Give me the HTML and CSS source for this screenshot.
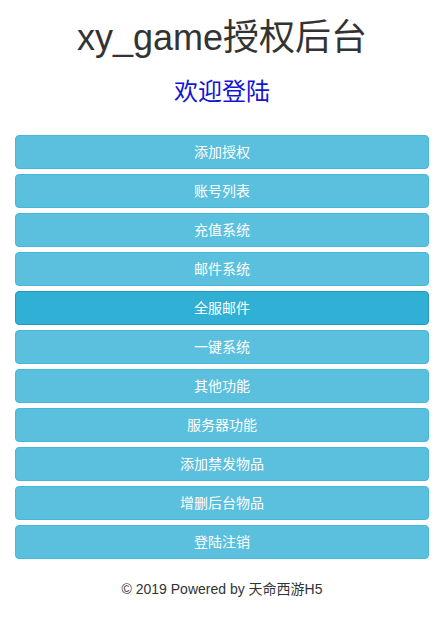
FILE: index.html
```html
<!DOCTYPE html>
<html lang="zh-CN">
<head>
<meta charset="utf-8">
<title>xy_game授权后台</title>
<link rel="stylesheet" href="styles.css">
</head>
<body>
<div class="container">
  <h1 class="title">xy_game授权后台</h1>
  <h3 class="welcome">欢迎登陆</h3>
  <div class="menu">
    <a class="btn">添加授权</a>
    <a class="btn">账号列表</a>
    <a class="btn">充值系统</a>
    <a class="btn">邮件系统</a>
    <a class="btn active">全服邮件</a>
    <a class="btn">一键系统</a>
    <a class="btn">其他功能</a>
    <a class="btn">服务器功能</a>
    <a class="btn">添加禁发物品</a>
    <a class="btn">增删后台物品</a>
    <a class="btn">登陆注销</a>
  </div>
  <p class="footer">© 2019 Powered by 天命西游H5</p>
</div>
</body>
</html>
```
FILE: styles.css
```css
html, body {
  margin: 0;
  padding: 0;
  background: #fff;
}
body {
  font-family: "Liberation Sans", Arial, "Noto Sans CJK SC", sans-serif;
  font-size: 14px;
  line-height: 1.42857;
  color: #333;
}
.container {
  padding: 0 15px;
}
.title {
  margin: 18px 0 0;
  font-size: 36px;
  font-weight: 400;
  line-height: 1.1;
  text-align: center;
  color: #333;
}
.welcome {
  margin: 21px 0 0;
  font-size: 24px;
  font-weight: 400;
  line-height: 1.1;
  text-align: center;
  color: #1414d4;
}
.menu {
  margin-top: 30px;
  display: flex;
  flex-direction: column;
  gap: 5px;
}
.btn {
  display: block;
  box-sizing: border-box;
  height: 34px;
  padding: 6px 12px;
  border: 1px solid #46b8da;
  border-radius: 4px;
  background: #5bc0de;
  color: #fff;
  font-size: 14px;
  line-height: 20px;
  text-align: center;
  text-decoration: none;
}
.btn.active {
  background: #31b0d5;
  border-color: #269abc;
}
.footer {
  margin: 20px 0 0;
  text-align: center;
  font-size: 14px;
  line-height: 20px;
  color: #333;
}
```
